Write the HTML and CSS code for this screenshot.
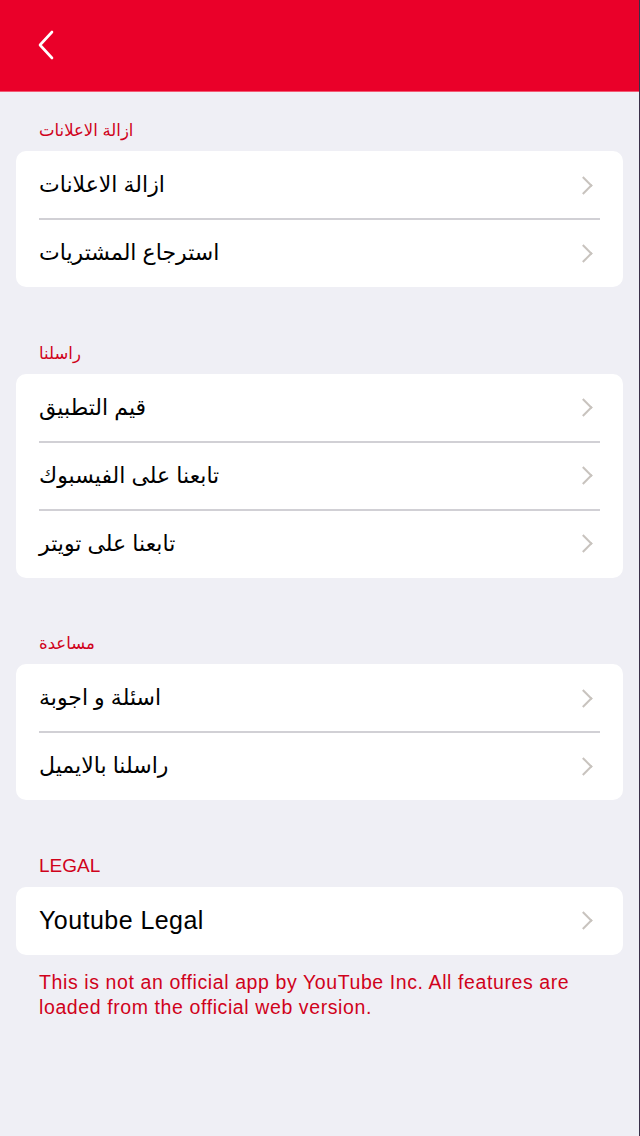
FILE: index.html
```html
<!DOCTYPE html>
<html lang="ar">
<head>
<meta charset="utf-8">
<title>Settings</title>
<link rel="stylesheet" href="styles.css">
</head>
<body>
<div class="screen">
  <header class="navbar">
    <svg class="back" width="18" height="30" viewBox="0 0 18 30" aria-hidden="true"><path d="M15 2 L3 15 L15 28" fill="none" stroke="#fff" stroke-width="2.6" stroke-linecap="round" stroke-linejoin="round"/></svg>
  </header>

  <section class="group">
    <div class="label ar">ازالة الاعلانات</div>
    <div class="card">
      <div class="row"><span class="text ar">ازالة الاعلانات</span><span class="chev"></span></div>
      <div class="row"><span class="text ar">استرجاع المشتريات</span><span class="chev"></span></div>
    </div>
  </section>

  <section class="group">
    <div class="label ar">راسلنا</div>
    <div class="card">
      <div class="row"><span class="text ar">قيم التطبيق</span><span class="chev"></span></div>
      <div class="row"><span class="text ar">تابعنا على الفيسبوك</span><span class="chev"></span></div>
      <div class="row"><span class="text ar">تابعنا على تويتر</span><span class="chev"></span></div>
    </div>
  </section>

  <section class="group">
    <div class="label ar">مساعدة</div>
    <div class="card">
      <div class="row"><span class="text ar">اسئلة و اجوبة</span><span class="chev"></span></div>
      <div class="row"><span class="text ar">راسلنا بالايميل</span><span class="chev"></span></div>
    </div>
  </section>

  <section class="group">
    <div class="label">LEGAL</div>
    <div class="card">
      <div class="row"><span class="text">Youtube Legal</span><span class="chev"></span></div>
    </div>
    <p class="note">This is not an official app by YouTube Inc. All features are loaded from the official web version.</p>
  </section>
</div>
</body>
</html>
```
FILE: styles.css
```css
html, body {
  margin: 0;
  padding: 0;
}
body {
  background: #efeff5;
  font-family: "Liberation Sans", "DejaVu Sans", sans-serif;
}
.screen {
  width: 639px;
  min-height: 1136px;
  border-right: 1px solid #3a2f48;
  background: #efeff5;
}
.navbar {
  height: 92px;
  background: #ea0029;
  border-bottom: 1px solid #f25a74;
  box-sizing: border-box;
  display: flex;
  align-items: center;
  padding-left: 37px;
}
.back {
  display: block;
  margin-top: -2px;
}
.group {
  padding-top: 28px;
}
.label {
  color: #d0021b;
  font-size: 19px;
  line-height: 20px;
  height: 20px;
  margin: 0 0 11px 39px;
}
.label.ar {
  font-size: 16.5px;
}
.card {
  margin: 0 16px 27.5px 16px;
  background: #fff;
  border-radius: 10px;
  overflow: hidden;
}
.row {
  height: 68px;
  display: flex;
  align-items: center;
  justify-content: space-between;
  padding: 0 30px 0 23px;
  position: relative;
}
.row + .row::before {
  content: "";
  position: absolute;
  left: 23px;
  right: 23px;
  top: -1px;
  height: 2px;
  background: #d1d0d5;
}
.text {
  font-size: 25px;
  letter-spacing: 0.45px;
  color: #000;
}
.text.ar {
  font-size: 22px;
  letter-spacing: 0;
}
.chev {
  width: 11px;
  height: 11px;
  border-top: 2.5px solid #c8c3be;
  border-right: 2.5px solid #c8c3be;
  transform: rotate(45deg);
  margin-right: 3px;
}
.note {
  margin: -12.5px 0 0 39px;
  width: 560px;
  color: #d0021b;
  font-size: 19.5px;
  letter-spacing: 0.6px;
  line-height: 25px;
}
```
